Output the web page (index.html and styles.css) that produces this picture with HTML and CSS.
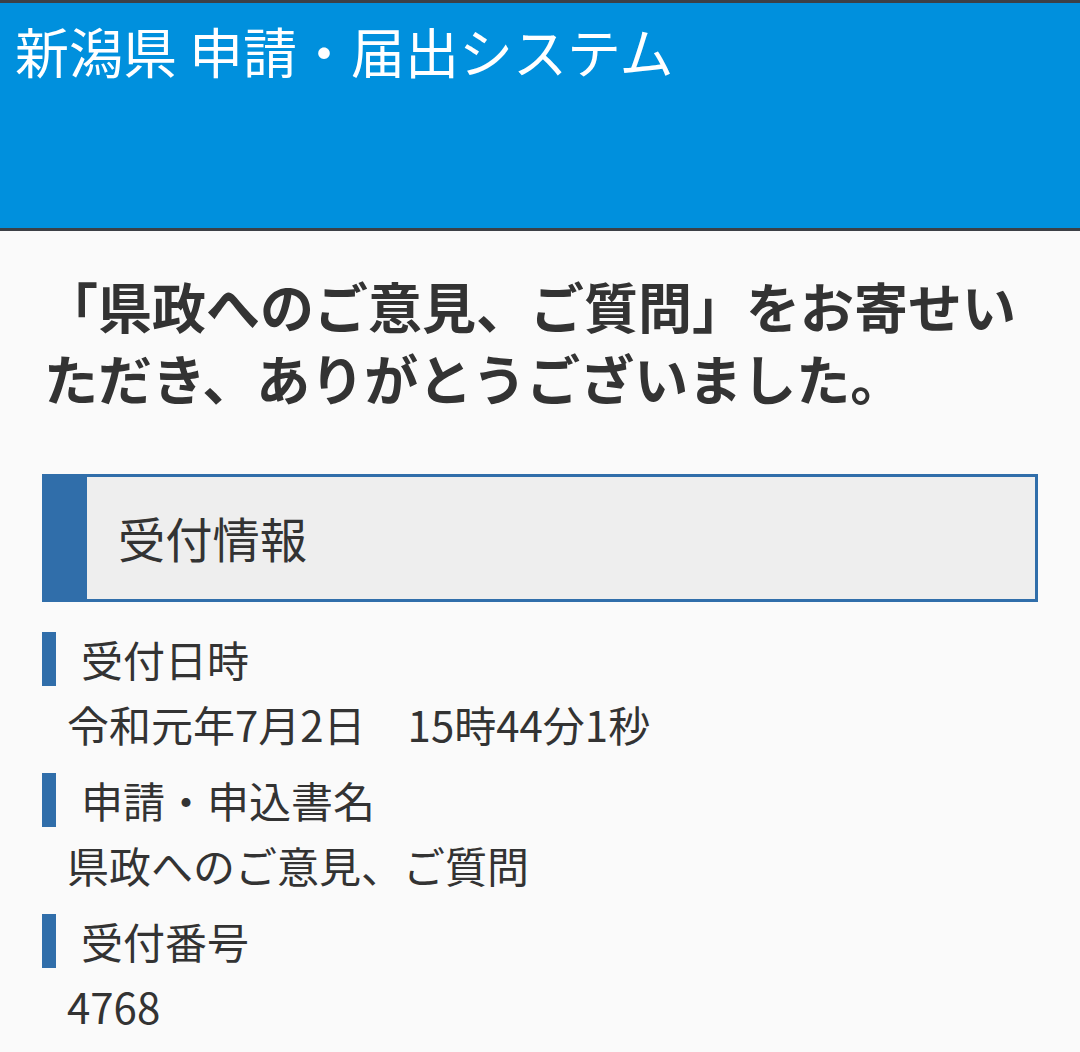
FILE: index.html
```html
<!DOCTYPE html>
<html lang="ja">
<head>
  <meta charset="UTF-8">
  <title>新潟県 申請・届出システム</title>
  <meta name="viewport" content="width=device-width, initial-scale=1.0">
  <link rel="stylesheet" href="styles.css">
</head>
<body>

  <header class="site-header">
    <h1 class="site-title">新潟県 申請・届出システム</h1>
  </header>

  <main class="content">

    <!-- Completion message -->
    <p class="complete-msg">「県政へのご意見、ご質問」をお寄せいただき、ありがとうございました。</p>

    <!-- Receipt info -->
    <section>
      <h2 class="section-title">受付情報</h2>
      <dl class="info-list">
        <dt>受付日時</dt>
        <dd>令和元年7月2日　15時44分1秒</dd>
        <dt>申請・申込書名</dt>
        <dd>県政へのご意見、ご質問</dd>
        <dt>受付番号</dt>
        <dd>4768</dd>
      </dl>
    </section>

  </main>

</body>
</html>
```

FILE: styles.css
```css
/* Base styles */
body {
  font-family: "Noto Sans CJK JP", "Noto Sans", sans-serif;
  margin: 0;
  padding: 0;
  background-color: #fafafa;
  color: #333;
}

/* Header */
.site-header {
  background-color: #0090dd;
  border-top: 3px solid #3c4046;
  border-bottom: 3px solid #3c4046;
  height: 225px;
  padding: 0 15px;
}

.site-title {
  margin: 0;
  font-size: 54px;
  font-weight: normal;
  line-height: 96px;
  color: white;
}

/* Content */
.content {
  padding: 39px 42px 0;
}

.complete-msg {
  margin: 0 0 60px;
  padding-left: 2px;
  font-size: 54px;
  font-weight: bold;
  line-height: 72px;
}

/* Section heading */
.section-title {
  margin: 0;
  height: 122px;
  line-height: 122px;
  padding-left: 31px;
  background-color: #eeeeee;
  border: 3px solid #306eaa;
  border-left-width: 45px;
  font-size: 47.25px;
  font-weight: normal;
}

/* Info list */
.info-list {
  margin: 30px 0 0;
  font-size: 42px;
}

.info-list dt {
  border-left: 14px solid #306eaa;
  padding-left: 25px;
  line-height: 54px;
}

.info-list dd {
  margin: 6px 0 18px;
  padding-left: 25px;
  line-height: 63px;
}
```
